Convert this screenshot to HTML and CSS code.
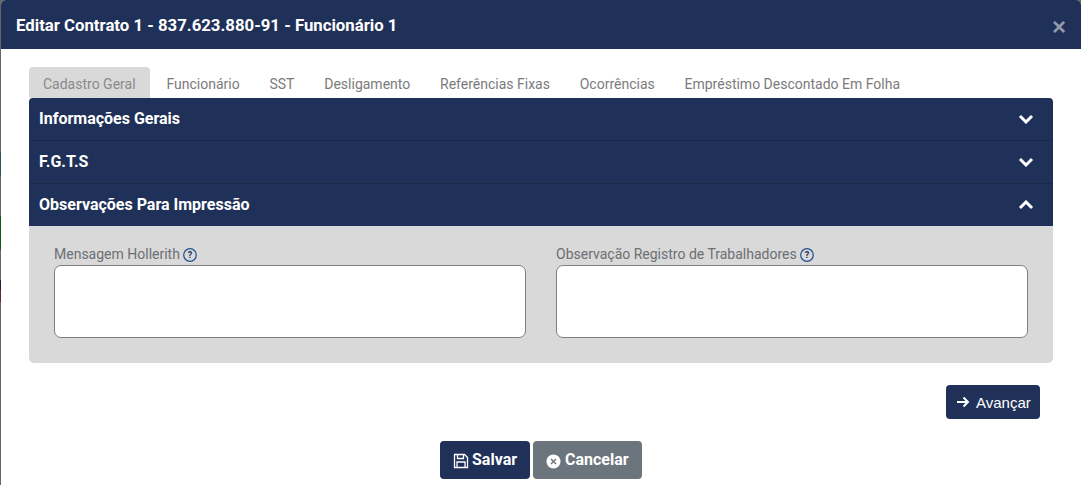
FILE: index.html
```html
<!DOCTYPE html>
<html lang="pt-BR">
<head>
    <meta charset="UTF-8">
    <meta name="viewport" content="width=device-width, initial-scale=1.0">
    <title>Editar Contrato</title>
    <link rel="stylesheet" href="styles.css">
</head>
<body>

    <div class="modal">
        <div class="modal-header">
            <h1>Editar Contrato 1 - 837.623.880-91 - Funcionário 1</h1>
            <button class="close">&times;</button>
        </div>

        <div class="modal-body">
            <ul class="tabs">
                <li class="tab active">Cadastro Geral</li>
                <li class="tab">Funcionário</li>
                <li class="tab">SST</li>
                <li class="tab">Desligamento</li>
                <li class="tab">Referências Fixas</li>
                <li class="tab">Ocorrências</li>
                <li class="tab">Empréstimo Descontado Em Folha</li>
            </ul>

            <div class="accordion">
                <div class="acc-header">
                    <span>Informações Gerais</span>
                    <svg class="chevron" viewBox="0 0 16 10"><path d="M2 2l6 6 6-6"/></svg>
                </div>
                <div class="acc-header">
                    <span>F.G.T.S</span>
                    <svg class="chevron" viewBox="0 0 16 10"><path d="M2 2l6 6 6-6"/></svg>
                </div>
                <div class="acc-header last">
                    <span>Observações Para Impressão</span>
                    <svg class="chevron" viewBox="0 0 16 10"><path d="M2 8l6-6 6 6"/></svg>
                </div>
                <div class="acc-panel">
                    <div class="form-group">
                        <label for="mensagem">Mensagem Hollerith
                            <svg class="help" viewBox="0 0 14 14"><circle cx="7" cy="7" r="6.300"/><text x="7" y="10.300">?</text></svg>
                        </label>
                        <textarea id="mensagem"></textarea>
                    </div>
                    <div class="form-group">
                        <label for="observacao">Observação Registro de Trabalhadores
                            <svg class="help" viewBox="0 0 14 14"><circle cx="7" cy="7" r="6.300"/><text x="7" y="10.300">?</text></svg>
                        </label>
                        <textarea id="observacao"></textarea>
                    </div>
                </div>
            </div>

            <div class="next-row">
                <button class="btn-next">
                    <svg class="arrow" viewBox="0 0 14 12"><path d="M1 6h11M7.500 1.500L12 6l-4.500 4.500"/></svg>
                    Avançar
                </button>
            </div>

            <div class="actions">
                <button class="btn btn-save">
                    <svg class="icon-save" viewBox="0 0 16 16"><path d="M1.500 1.500h10l3 3v10h-13z"/><path d="M4.500 1.500v4h6v-4"/><path d="M4 14.500v-5.500h8v5.500"/></svg>
                    Salvar
                </button>
                <button class="btn btn-cancel">
                    <svg class="icon-cancel" viewBox="0 0 16 16"><circle cx="8" cy="8" r="7.500"/><path d="M5.300 5.300l5.400 5.400M10.700 5.300l-5.400 5.400"/></svg>
                    Cancelar
                </button>
            </div>
        </div>
    </div>

</body>
</html>
```

FILE: styles.css
```css
* {
    box-sizing: border-box;
}
html, body {
    height: 100%;
}
body {
    margin: 0;
    padding-left: 1px;
    overflow: hidden;
    font-family: Roboto, "Liberation Sans", sans-serif;
    background: linear-gradient(#666 0 152px, #2c5560 152px 176px, #666 176px 216px, #0d5a25 216px 250px, #666 250px 280px, #1a2338 280px 290px, #5a2a35 290px 302px, #666 302px);
}
.modal {
    height: 100%;
    background-color: #fff;
    border-radius: 5px 5px 0 0;
    overflow: hidden;
}
.modal-header {
    height: 49px;
    display: flex;
    align-items: center;
    justify-content: space-between;
    padding: 0 15px;
    background-color: #1f3158;
    color: #fff;
}
.modal-header h1 {
    margin: 1px 0 0;
    font-size: 16.750px;
    font-weight: 700;
}
.close {
    margin: 4px 0 0 0;
    padding: 0;
    border: none;
    background: none;
    color: #9299a8;
    font-family: "Liberation Sans", sans-serif;
    font-size: 24px;
    font-weight: 700;
    line-height: 1;
}
.modal-body {
    padding: 18px 28px 0;
}
.tabs {
    display: flex;
    height: 31px;
    margin: 0;
    padding: 0;
    list-style: none;
}
.tab {
    padding: 8px 14.900px 0;
    font-size: 14px;
    line-height: 19px;
    color: #7b7b7b;
}
.tab.active {
    padding: 8px 14px 0;
    background-color: #d9d9d9;
    border-radius: 4px 4px 0 0;
    color: #8a8a8a;
    margin-right: 2px;
}
.accordion {
    width: 1024px;
}
.acc-header {
    height: 43px;
    display: flex;
    align-items: center;
    justify-content: space-between;
    padding: 0 19px 0 10px;
    background-color: #1f3158;
    border-bottom: 1px solid #1a2947;
    color: #fff;
    font-size: 16px;
    font-weight: 700;
}
.acc-header span {
    margin-top: -2px;
}
.acc-header:first-child {
    border-radius: 4px 4px 0 0;
}
.acc-header.last {
    height: 42px;
    border-bottom: none;
}
.chevron {
    width: 16px;
    height: 10px;
    fill: none;
    stroke: #fff;
    stroke-width: 3;
}
.acc-panel {
    display: grid;
    grid-template-columns: 472px 472px;
    column-gap: 30px;
    height: 137px;
    padding: 19px 25px 0;
    background-color: #d9d9d9;
    border-radius: 0 0 5px 5px;
}
.form-group label {
    display: flex;
    align-items: flex-start;
    gap: 3px;
    height: 20px;
    font-size: 14px;
    line-height: 18px;
    color: #6c6f73;
}
.help {
    width: 14px;
    height: 14px;
    margin-top: 3px;
}
.help circle {
    fill: none;
    stroke: #1f4f8f;
    stroke-width: 1.200;
}
.help text {
    fill: #1f3158;
    font-size: 9px;
    font-weight: 700;
    text-anchor: middle;
}
textarea {
    display: block;
    width: 100%;
    height: 73px;
    border: 1px solid #7f7f7f;
    border-radius: 7px;
    background-color: #fff;
    resize: none;
}
.next-row {
    display: flex;
    justify-content: flex-end;
    padding: 22px 13px 0 0;
    width: 1024px;
}
.btn-next {
    display: flex;
    align-items: center;
    gap: 6px;
    width: 94px;
    height: 34px;
    padding: 0 0 0 10px;
    border: none;
    border-radius: 4px;
    background-color: #1f3158;
    color: #fff;
    font-family: "Liberation Sans", sans-serif;
    font-size: 15px;
}
.arrow {
    width: 14px;
    height: 12px;
    fill: none;
    stroke: #fff;
    stroke-width: 2;
}
.actions {
    display: flex;
    justify-content: center;
    gap: 3px;
    margin-top: 22px;
    width: 1024px;
}
.btn {
    display: flex;
    align-items: center;
    gap: 3px;
    width: 90px;
    height: 38px;
    padding: 0 0 1px 13px;
    border: none;
    border-radius: 4px;
    color: #fff;
    font-family: Roboto, sans-serif;
    font-size: 16px;
    font-weight: 700;
}
.btn-save {
    background-color: #1f3158;
}
.btn-cancel {
    width: 109px;
    gap: 4px;
    background-color: #6c757d;
}
.icon-save {
    width: 16px;
    height: 16px;
    margin-top: 3px;
    fill: none;
    stroke: #fff;
    stroke-width: 1.300;
}
.icon-cancel {
    width: 15px;
    height: 15px;
    margin-top: 4px;
}
.icon-cancel circle {
    fill: #fff;
}
.icon-cancel path {
    fill: none;
    stroke: #6c757d;
    stroke-width: 1.500;
}
```
